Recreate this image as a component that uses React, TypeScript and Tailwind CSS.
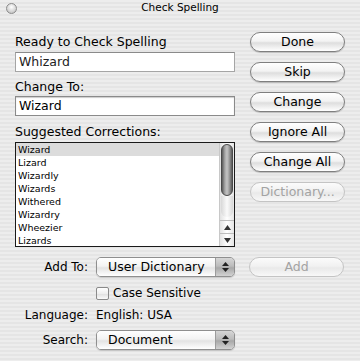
import React from 'react';

const font = { fontFamily: '"DejaVu Sans", "Liberation Sans", Arial, sans-serif' };

const AquaButton: React.FC<{ label: string; disabled?: boolean }> = ({ label, disabled }) => (
  <div
    className={
      disabled
        ? 'h-[20px] w-[95px] rounded-full border border-[#c4c4c4] bg-[linear-gradient(to_bottom,#fbfbfb,#f1f1f1_45%,#e9e9e9_55%,#f8f8f8)] flex items-center justify-center text-[12.5px] text-[#a3a3a3]'
        : 'h-[20px] w-[95px] rounded-full border border-[#7f7f7f] bg-[linear-gradient(to_bottom,#ffffff,#f3f3f3_45%,#dedede_55%,#ffffff)] shadow-[0_1px_1px_rgba(0,0,0,0.2)] flex items-center justify-center text-[12.5px] text-black'
    }
  >
    {label}
  </div>
);

const Popup: React.FC<{ value: string }> = ({ value }) => (
  <div className="h-[20px] w-[139px] flex rounded-[5px] border border-[#8f8f8f] overflow-hidden shadow-[0_1px_1px_rgba(0,0,0,0.15)]">
    <div className="flex-1 flex items-center pl-[11px] text-[12.5px] bg-[linear-gradient(to_bottom,#ffffff,#f3f3f3_45%,#e3e3e3_55%,#ffffff)]">
      {value}
    </div>
    <div className="w-[19px] flex flex-col items-center justify-center gap-[2px] border-l border-[#9c9c9c] bg-[linear-gradient(to_bottom,#d6d6d6,#bcbcbc_45%,#a8a8a8_55%,#d2d2d2)]">
      <svg width="7" height="4" viewBox="0 0 7 4">
        <path d="M3.5 0 L7 4 L0 4 Z" fill="#222" />
      </svg>
      <svg width="7" height="4" viewBox="0 0 7 4">
        <path d="M0 0 L7 0 L3.5 4 Z" fill="#222" />
      </svg>
    </div>
  </div>
);

const suggestions = ['Wizard', 'Lizard', 'Wizardly', 'Wizards', 'Withered', 'Wizardry', 'Wheezier', 'Lizards'];

export default function App() {
  return (
    <div
      style={font}
      className="w-[360px] h-[361px] overflow-hidden text-black bg-[repeating-linear-gradient(to_bottom,#ededed_0px,#ededed_2px,#e5e5e5_2px,#e5e5e5_4px)]"
    >
      {/* title bar */}
      <div className="relative h-[16px] flex items-center justify-center text-[10.5px]">
        <div className="absolute left-[6px] top-[3px] w-[11px] h-[11px] rounded-full border border-[#8c8c8c] bg-[radial-gradient(circle_at_50%_35%,#ffffff,#d4d4d4_60%,#b5b5b5)]" />
        Check Spelling
      </div>

      {/* top section */}
      <div className="flex pl-[15px]">
        <div className="w-[220px] flex flex-col">
          <div className="mt-[18px] h-[16px] leading-[16px] text-[12.5px]">Ready to Check Spelling</div>
          <div className="mt-[2px] h-[20px] bg-white border border-[#a5a5a5] border-t-[#8a8a8a] flex items-center pl-[3px] text-[12.5px] text-[#222]">
            Whizard
          </div>
          <div className="mt-[7px] h-[16px] leading-[16px] text-[12.5px]">Change To:</div>
          <div className="mt-[1px] h-[20px] bg-white border border-[#8a8a8a] shadow-[inset_0_1px_1px_rgba(0,0,0,0.2)] flex items-center pl-[3px] text-[12.5px]">
            Wizard
          </div>
          <div className="mt-[8px] h-[16px] leading-[16px] text-[12.5px]">Suggested Corrections:</div>
          <div className="mt-[2px] h-[105px] flex border border-[#1a1a1a] bg-white">
            <div className="flex-1 flex flex-col overflow-hidden">
              {suggestions.map((s, i) => (
                <div
                  key={s}
                  className={
                    i === 0
                      ? 'h-[13px] shrink-0 leading-[13px] pl-[2px] text-[9.5px] bg-[#dcdcdc]'
                      : 'h-[13px] shrink-0 leading-[13px] pl-[2px] text-[9.5px]'
                  }
                >
                  {s}
                </div>
              ))}
            </div>
            {/* scrollbar */}
            <div className="w-[15px] flex flex-col border-l border-[#c8c8c8] bg-[linear-gradient(to_right,#e2e2e2,#ffffff_50%,#e6e6e6)]">
              <div className="mx-[1px] mt-[1px] h-[52px] rounded-full border border-[#4a4a4a] bg-[linear-gradient(to_right,#5a5a5a,#a8a8a8_30%,#c4c4c4_50%,#a0a0a0_70%,#5a5a5a)]" />
              <div className="flex-1 mx-[1px] rounded-b-full bg-[linear-gradient(to_right,#d8d8d8,#fafafa_50%,#d8d8d8)] mb-[3px]" />
              <div className="h-[13px] flex items-center justify-center border-t border-[#bdbdbd]">
                <svg width="7" height="5" viewBox="0 0 7 5">
                  <path d="M3.5 0 L7 5 L0 5 Z" fill="#333" />
                </svg>
              </div>
              <div className="h-[13px] flex items-center justify-center border-t border-[#bdbdbd]">
                <svg width="7" height="5" viewBox="0 0 7 5">
                  <path d="M0 0 L7 0 L3.5 5 Z" fill="#333" />
                </svg>
              </div>
            </div>
          </div>
        </div>

        <div className="ml-[15px] pt-[16px] flex flex-col gap-[10px]">
          <AquaButton label="Done" />
          <AquaButton label="Skip" />
          <AquaButton label="Change" />
          <AquaButton label="Ignore All" />
          <AquaButton label="Change All" />
          <AquaButton label="Dictionary..." disabled />
        </div>
      </div>

      {/* bottom section */}
      <div className="flex flex-col text-[12px]">
        <div className="mt-[10px] flex items-center">
          <div className="w-[88px] text-right">Add To:</div>
          <div className="ml-[8px]">
            <Popup value="User Dictionary" />
          </div>
          <div className="ml-[14px]">
            <AquaButton label="Add" disabled />
          </div>
        </div>
        <div className="mt-[8px] flex items-center pl-[96px]">
          <div className="w-[13px] h-[13px] rounded-[2px] border border-[#8a8a8a] bg-[linear-gradient(to_bottom,#ffffff,#eeeeee_50%,#e0e0e0_55%,#fafafa)]" />
          <div className="ml-[4px] leading-[16px]">Case Sensitive</div>
        </div>
        <div className="mt-[6px] flex h-[16px] leading-[16px]">
          <div className="w-[88px] text-right">Language:</div>
          <div className="ml-[8px]">English: USA</div>
        </div>
        <div className="mt-[7px] flex items-center">
          <div className="w-[88px] text-right">Search:</div>
          <div className="ml-[8px]">
            <Popup value="Document" />
          </div>
        </div>
      </div>
    </div>
  );
}
